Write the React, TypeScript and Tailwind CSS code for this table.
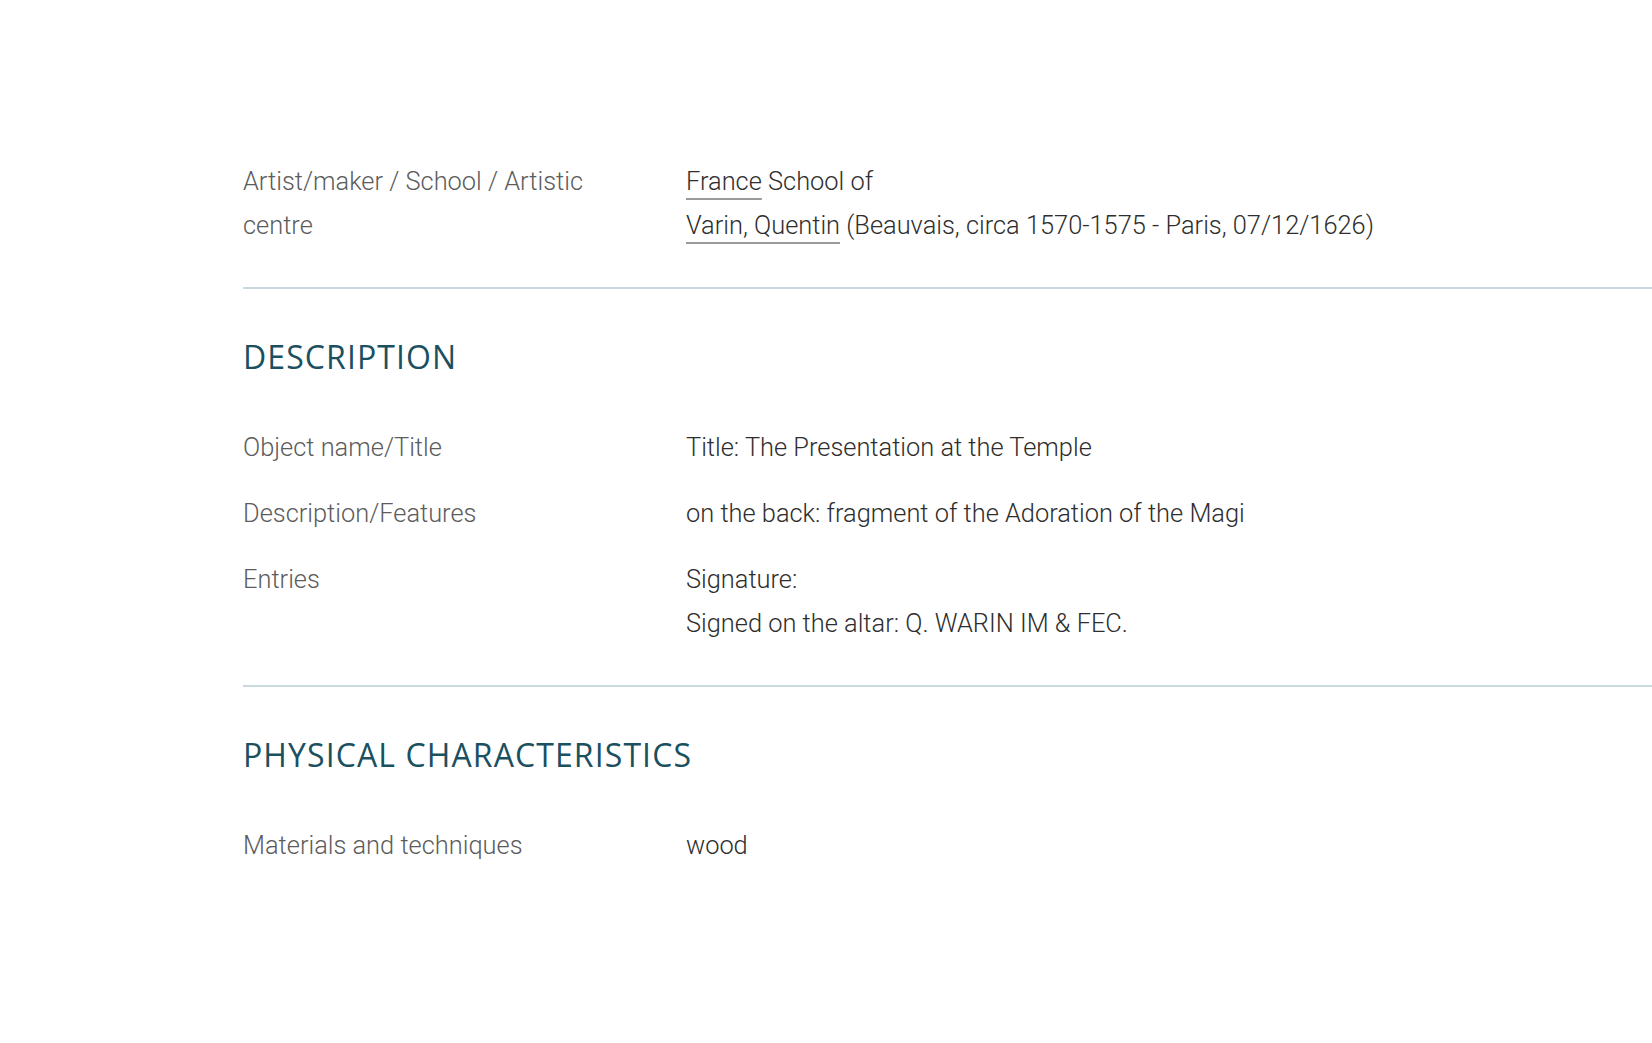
import React from 'react';

type Row = { label: React.ReactNode; value: React.ReactNode };

const LinkText: React.FC<{ children: React.ReactNode }> = ({ children }) => (
  <a
    href="#"
    className="text-[#2e2e2e] underline decoration-[#9a9a9a] decoration-[1.5px] underline-offset-[8px]"
  >
    {children}
  </a>
);

const Rows: React.FC<{ rows: Row[] }> = ({ rows }) => (
  <div className="flex flex-col gap-[22px]">
    {rows.map((row, i) => (
      <div key={i} className="flex">
        <div className="w-[443px] shrink-0 pr-10 text-[#5c5c5c]">{row.label}</div>
        <div className="text-[#2e2e2e]">{row.value}</div>
      </div>
    ))}
  </div>
);

const Heading: React.FC<{ children: React.ReactNode }> = ({ children }) => (
  <h2
    className="mb-[48px] h-10 text-[32px] font-normal leading-10 tracking-[1.1px] text-[#1b5060]"
    style={{ fontFamily: '"Open Sans", "Noto Sans", sans-serif' }}
  >
    {children}
  </h2>
);

const App: React.FC = () => {
  return (
    <div
      className="min-h-screen bg-white pt-[159px] pl-[243px] text-[25.4px] font-light leading-[44px]"
      style={{ fontFamily: 'Roboto, "Liberation Sans", sans-serif' }}
    >
      <section className="border-b-2 border-[#cad9df] pb-10">
        <Rows
          rows={[
            {
              label: 'Artist/maker / School / Artistic centre',
              value: (
                <>
                  <div>
                    <LinkText>France</LinkText> School of
                  </div>
                  <div>
                    <LinkText>Varin, Quentin</LinkText> (Beauvais, circa 1570-1575 - Paris, 07/12/1626)
                  </div>
                </>
              ),
            },
          ]}
        />
      </section>

      <section className="border-b-2 border-[#cad9df] pt-12 pb-10">
        <Heading>DESCRIPTION</Heading>
        <Rows
          rows={[
            { label: 'Object name/Title', value: 'Title: The Presentation at the Temple' },
            { label: 'Description/Features', value: 'on the back: fragment of the Adoration of the Magi' },
            {
              label: 'Entries',
              value: (
                <>
                  <div>Signature:</div>
                  <div>Signed on the altar: Q. WARIN IM &amp; FEC.</div>
                </>
              ),
            },
          ]}
        />
      </section>

      <section className="pt-12 pb-24">
        <Heading>PHYSICAL CHARACTERISTICS</Heading>
        <Rows rows={[{ label: 'Materials and techniques', value: 'wood' }]} />
      </section>
    </div>
  );
};

export default App;
